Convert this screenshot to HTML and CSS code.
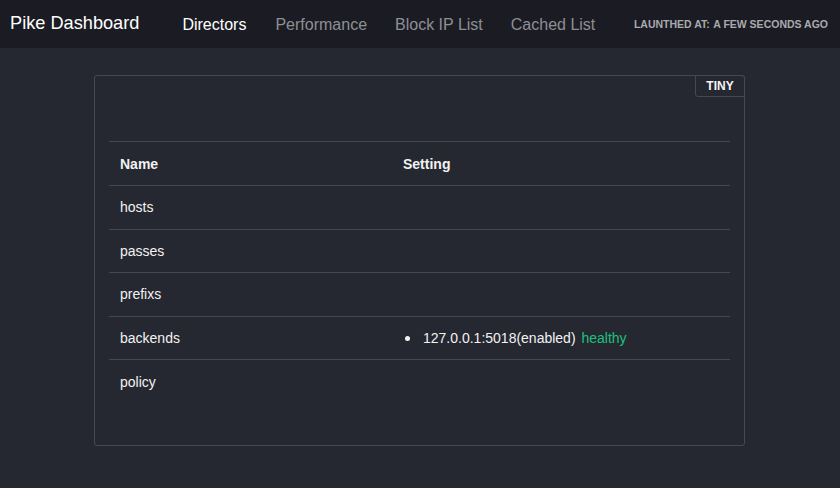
FILE: index.html
```html
<!DOCTYPE html>
<html>
<head>
<meta charset="utf-8">
<link rel="stylesheet" href="styles.css">
</head>
<body>
<header class="nav">
  <div class="brand">Pike Dashboard</div>
  <nav class="menu">
    <a class="item active">Directors</a>
    <a class="item">Performance</a>
    <a class="item">Block IP List</a>
    <a class="item">Cached List</a>
  </nav>
  <div class="launch"><span>LAUNTHED AT:</span> <span>A FEW SECONDS AGO</span></div>
</header>
<main class="main">
  <section class="card">
    <div class="tag">TINY</div>
    <table class="table">
      <thead>
        <tr><th class="col-name">Name</th><th>Setting</th></tr>
      </thead>
      <tbody>
        <tr><td>hosts</td><td></td></tr>
        <tr><td>passes</td><td></td></tr>
        <tr><td>prefixs</td><td></td></tr>
        <tr><td>backends</td><td><ul class="list"><li>127.0.0.1:5018(enabled) <span class="ok">healthy</span></li></ul></td></tr>
        <tr><td>policy</td><td></td></tr>
      </tbody>
    </table>
  </section>
</main>
</body>
</html>
```

FILE: styles.css
```css
* { box-sizing: border-box; }
html, body { margin: 0; padding: 0; }
body {
  background: #262831;
  color: #f2f2f2;
  font-family: "Liberation Sans", Arial, sans-serif;
  font-size: 14px;
  height: 488px;
  overflow: hidden;
}
.nav {
  height: 48px;
  background: #1b1c23;
  display: flex;
  align-items: center;
  padding: 0 12px 0 10px;
}
.brand {
  font-size: 18.2px;
  color: #ffffff;
  margin-right: 29px;
  padding-bottom: 2px;
}
.menu { display: flex; }
.item {
  font-size: 16px;
  color: #8e8f94;
  padding: 0 14px;
  line-height: 20px;
  padding-top: 2px;
}
.item.active { color: #ffffff; }
.item:first-child { padding-right: 16px; }
.item:nth-child(2) { padding-left: 13px; }
.launch {
  margin-left: auto;
  font-size: 10.5px;
  font-weight: bold;
  color: #a9aaae;
  padding-bottom: 1px;
}
.launch span:first-child { margin-right: 1px; }
.main {
  display: flex;
  justify-content: center;
  padding-top: 27px;
  padding-right: 1px;
}
.card {
  position: relative;
  width: 651px;
  border: 1px solid #464952;
  border-radius: 3px;
  padding: 65px 14px 42px 14px;
}
.tag {
  position: absolute;
  top: -1px;
  right: -1px;
  height: 22px;
  width: 50px;
  border: 1px solid #464952;
  border-radius: 0 3px 0 3px;
  background: #262831;
  font-size: 12px;
  font-weight: bold;
  color: #f4f4f4;
  text-align: center;
  line-height: 20px;
}
.table {
  width: 100%;
  border-collapse: collapse;
}
.table th, .table td {
  text-align: left;
  padding: 11.25px 11px;
  line-height: 20px;
  height: 43.5px;
  border-top: 1px solid #44474f;
  vertical-align: middle;
}
.table th { font-weight: bold; padding: 11.5px 11px; height: 44px; }
.col-name { width: 283px; }
.list { margin: 0; padding: 0 0 0 20px; list-style: none; }
.list li { position: relative; line-height: 20px; height: 20px; }
.list li::before {
  content: "";
  position: absolute;
  left: -18px;
  top: 8px;
  width: 5px;
  height: 5px;
  border-radius: 50%;
  background: #f2f2f2;
}
.ok { color: #1ec07e; margin-left: 2px; }
```
